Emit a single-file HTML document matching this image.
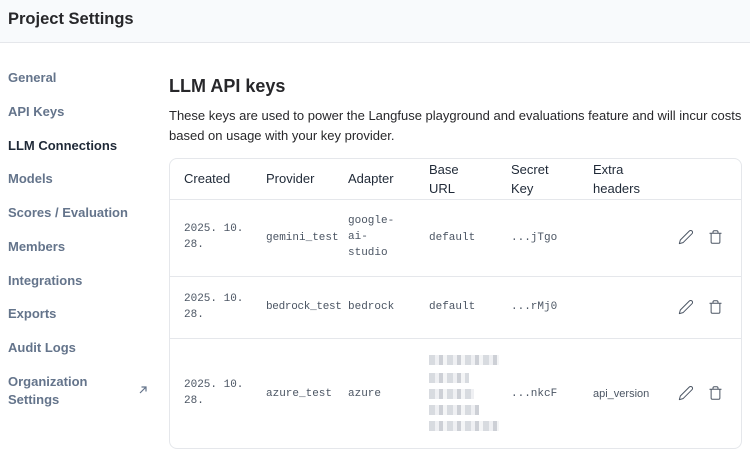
<!DOCTYPE html>
<html><head><style>
*{box-sizing:border-box;margin:0;padding:0}
body{width:750px;height:460px;overflow:hidden;background:#fff;font-family:"Liberation Sans",sans-serif;color:#1f2937;position:relative}
.hdr{position:absolute;left:0;top:0;width:750px;height:43px;background:#f8fafc;border-bottom:1px solid #e5e7eb}
.hdr h1{position:absolute;left:8px;top:10px;font-size:16.5px;font-weight:700;color:#27272a}
.nav{position:absolute;left:8px;font-size:13px;font-weight:700;color:#64748b}
.nav.a{color:#1f2937}
h2{position:absolute;left:169px;top:76px;font-size:18px;font-weight:700;color:#27272a}
.desc{position:absolute;left:169px;top:106px;width:580px;font-size:13px;line-height:20px;color:#27272a}
.card{position:absolute;left:169px;top:158px;width:573px;height:291px;border:1px solid #e5e7eb;border-radius:8px}
.t{position:absolute;font-size:13px;color:#1f2937;line-height:19px}
.m{position:absolute;font-family:"Liberation Mono",monospace;font-size:11px;color:#4b5563;line-height:16px}
.line{position:absolute;left:0;width:571px;height:1px;background:#e5e7eb}
.blur{position:absolute;left:429px;width:70px;height:10px;background:repeating-linear-gradient(90deg,#c8ccd2 0 6px,#e8eaee 6px 10px,#b8bcc4 10px 14px,#f0f1f3 14px 18px);opacity:.7}
svg{position:absolute}
</style></head><body>
<div class="hdr"><h1>Project Settings</h1></div>
<div class="nav" style="top:70px">General</div>
<div class="nav" style="top:104px">API Keys</div>
<div class="nav a" style="top:138px">LLM Connections</div>
<div class="nav" style="top:171px">Models</div>
<div class="nav" style="top:205px">Scores / Evaluation</div>
<div class="nav" style="top:239px">Members</div>
<div class="nav" style="top:273px">Integrations</div>
<div class="nav" style="top:306px">Exports</div>
<div class="nav" style="top:340px">Audit Logs</div>
<div class="nav" style="top:373px;line-height:18px">Organization<br>Settings</div>
<svg style="left:138px;top:385px" width="10" height="10" viewBox="0 0 10 10"><path d="M2 8L8 2M3.5 2H8V6.5" stroke="#64748b" stroke-width="1.2" fill="none"/></svg>
<h2>LLM API keys</h2>
<div class="desc">These keys are used to power the Langfuse playground and evaluations feature and will incur costs based on usage with your key provider.</div>
<div class="card">
<div class="line" style="top:40px"></div>
<div class="line" style="top:117px"></div>
<div class="line" style="top:179px"></div>
</div>
<div class="t" style="left:184px;top:169px">Created</div>
<div class="t" style="left:266px;top:169px">Provider</div>
<div class="t" style="left:348px;top:169px">Adapter</div>
<div class="t" style="left:429px;top:160px">Base<br>URL</div>
<div class="t" style="left:511px;top:160px">Secret<br>Key</div>
<div class="t" style="left:593px;top:160px">Extra<br>headers</div>

<div class="m" style="left:184px;top:221px">2025. 10.<br>28.</div>
<div class="m" style="left:266px;top:230px">gemini_test</div>
<div class="m" style="left:348px;top:213px">google-<br>ai-<br>studio</div>
<div class="m" style="left:429px;top:230px">default</div>
<div class="m" style="left:511px;top:230px">...jTgo</div>

<div class="m" style="left:184px;top:291px">2025. 10.<br>28.</div>
<div class="m" style="left:266px;top:299px;letter-spacing:-0.3px">bedrock_test</div>
<div class="m" style="left:348px;top:299px">bedrock</div>
<div class="m" style="left:429px;top:299px">default</div>
<div class="m" style="left:511px;top:299px">...rMj0</div>

<div class="m" style="left:184px;top:377px">2025. 10.<br>28.</div>
<div class="m" style="left:266px;top:386px">azure_test</div>
<div class="m" style="left:348px;top:386px">azure</div>
<div class="blur" style="top:355px"></div>
<div class="blur" style="top:373px;width:40px"></div>
<div class="blur" style="top:389px;width:45px"></div>
<div class="blur" style="top:405px;width:50px"></div>
<div class="blur" style="top:421px"></div>
<div class="m" style="left:511px;top:386px">...nkcF</div>
<div class="t" style="left:593px;top:385px;font-size:11px;color:#4b5563">api_version</div>

<svg style="left:678px;top:229px" width="16" height="16" viewBox="0 0 24 24" fill="none" stroke="#4b5563" stroke-width="1.5" stroke-linecap="round" stroke-linejoin="round"><path d="M17 3a2.8 2.8 0 0 1 4 4L7.5 20.5 2 22l1.5-5.5Z"/></svg>
<svg style="left:708px;top:229px" width="15" height="16" viewBox="0 0 24 24" fill="none" stroke="#4b5563" stroke-width="1.6" stroke-linecap="round"><path d="M3 6h18M19 6v14a2 2 0 0 1-2 2H7a2 2 0 0 1-2-2V6M8 6V4a2 2 0 0 1 2-2h4a2 2 0 0 1 2 2v2"/></svg>
<svg style="left:678px;top:299px" width="16" height="16" viewBox="0 0 24 24" fill="none" stroke="#4b5563" stroke-width="1.5" stroke-linecap="round" stroke-linejoin="round"><path d="M17 3a2.8 2.8 0 0 1 4 4L7.5 20.5 2 22l1.5-5.5Z"/></svg>
<svg style="left:708px;top:299px" width="15" height="16" viewBox="0 0 24 24" fill="none" stroke="#4b5563" stroke-width="1.6" stroke-linecap="round"><path d="M3 6h18M19 6v14a2 2 0 0 1-2 2H7a2 2 0 0 1-2-2V6M8 6V4a2 2 0 0 1 2-2h4a2 2 0 0 1 2 2v2"/></svg>
<svg style="left:678px;top:385px" width="16" height="16" viewBox="0 0 24 24" fill="none" stroke="#4b5563" stroke-width="1.5" stroke-linecap="round" stroke-linejoin="round"><path d="M17 3a2.8 2.8 0 0 1 4 4L7.5 20.5 2 22l1.5-5.5Z"/></svg>
<svg style="left:708px;top:385px" width="15" height="16" viewBox="0 0 24 24" fill="none" stroke="#4b5563" stroke-width="1.6" stroke-linecap="round"><path d="M3 6h18M19 6v14a2 2 0 0 1-2 2H7a2 2 0 0 1-2-2V6M8 6V4a2 2 0 0 1 2-2h4a2 2 0 0 1 2 2v2"/></svg>
</body></html>
